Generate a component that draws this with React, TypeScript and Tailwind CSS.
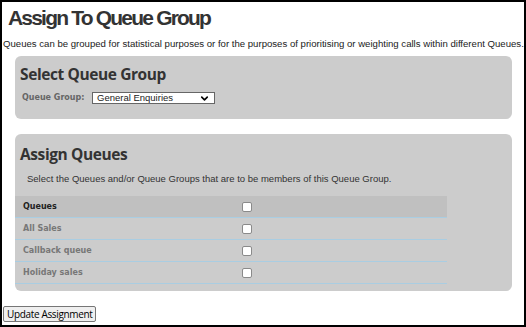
import { ChevronDown } from 'lucide-react'

const queues = ['All Sales', 'Callback queue', 'Holiday sales']

function Box() {
  return <span className="block w-[10px] h-[10px] rounded-[2px] border border-[#8a8a8a] bg-white" />
}

export default function App() {
  return (
    <div className="w-[526px] h-[327px] border-2 border-black bg-white overflow-hidden font-['Liberation_Sans',Arial,sans-serif] text-[#222]">
      {/* Title */}
      <h1 className="pl-[6px] pt-[3px] text-[21px] leading-[26px] font-bold text-[#333] tracking-[-1.8px]">Assign To Queue Group</h1>
      <p className="pl-[1px] mt-[6px] text-[9.6px] leading-[13px] whitespace-nowrap">
        Queues can be grouped for statistical purposes or for the purposes of prioritising or weighting calls within different Queues.
      </p>

      {/* Select Queue Group */}
      <section className="ml-[13px] mr-[12px] mt-[6px] h-[63px] rounded-[6px] bg-[#cccccc] px-[5px] pt-[9px]">
        <h2 className="text-[15.5px] leading-[18px] font-bold text-[#333] font-['Open_Sans',sans-serif] tracking-[-0.4px]">Select Queue Group</h2>
        <div className="flex items-center mt-[9px] pl-[2px]">
          <span className="w-[70px] text-[8px] font-bold text-[#666] font-['DejaVu_Sans',sans-serif]">Queue Group:</span>
          <div className="flex items-center justify-between w-[123px] h-[12px] border border-[#666] bg-white px-[4px] text-[9.5px] leading-[10px]">
            <span>General Enquiries</span>
            <ChevronDown size={11} strokeWidth={3.5} className="text-black" />
          </div>
        </div>
      </section>

      {/* Assign Queues */}
      <section className="ml-[13px] mr-[12px] mt-[15px] h-[157px] rounded-[6px] bg-[#cccccc] pt-[11px]">
        <h2 className="pl-[5px] text-[15.5px] leading-[18px] font-bold text-[#333] font-['Open_Sans',sans-serif] tracking-[-0.4px]">Assign Queues</h2>
        <p className="pl-[12px] mt-[10px] text-[9.5px] leading-[12px] text-[#333]">
          Select the Queues and/or Queue Groups that are to be members of this Queue Group.
        </p>
        <div className="w-[432px] mt-[11px] font-['DejaVu_Sans',sans-serif] text-[8px] font-bold">
          <div className="flex items-center h-[22px] bg-[#c0c0c0] border-b border-[#a9cde2]">
            <span className="w-[227px] pl-[8px] text-[#222]">Queues</span>
            <Box />
          </div>
          {queues.map(q => (
            <div key={q} className="flex items-center h-[22px] border-b border-[#a9cde2]">
              <span className="w-[227px] pl-[8px] text-[#777]">{q}</span>
              <Box />
            </div>
          ))}
        </div>
      </section>

      <div className="flex pl-[1px] mt-[15px]">
        <button className="h-[16px] px-[3px] border border-[#767676] rounded-[2px] bg-[#efefef] text-[10px] leading-[14px] text-black font-['Open_Sans',sans-serif] tracking-[-0.35px]">
          Update Assignment
        </button>
      </div>
    </div>
  )
}
